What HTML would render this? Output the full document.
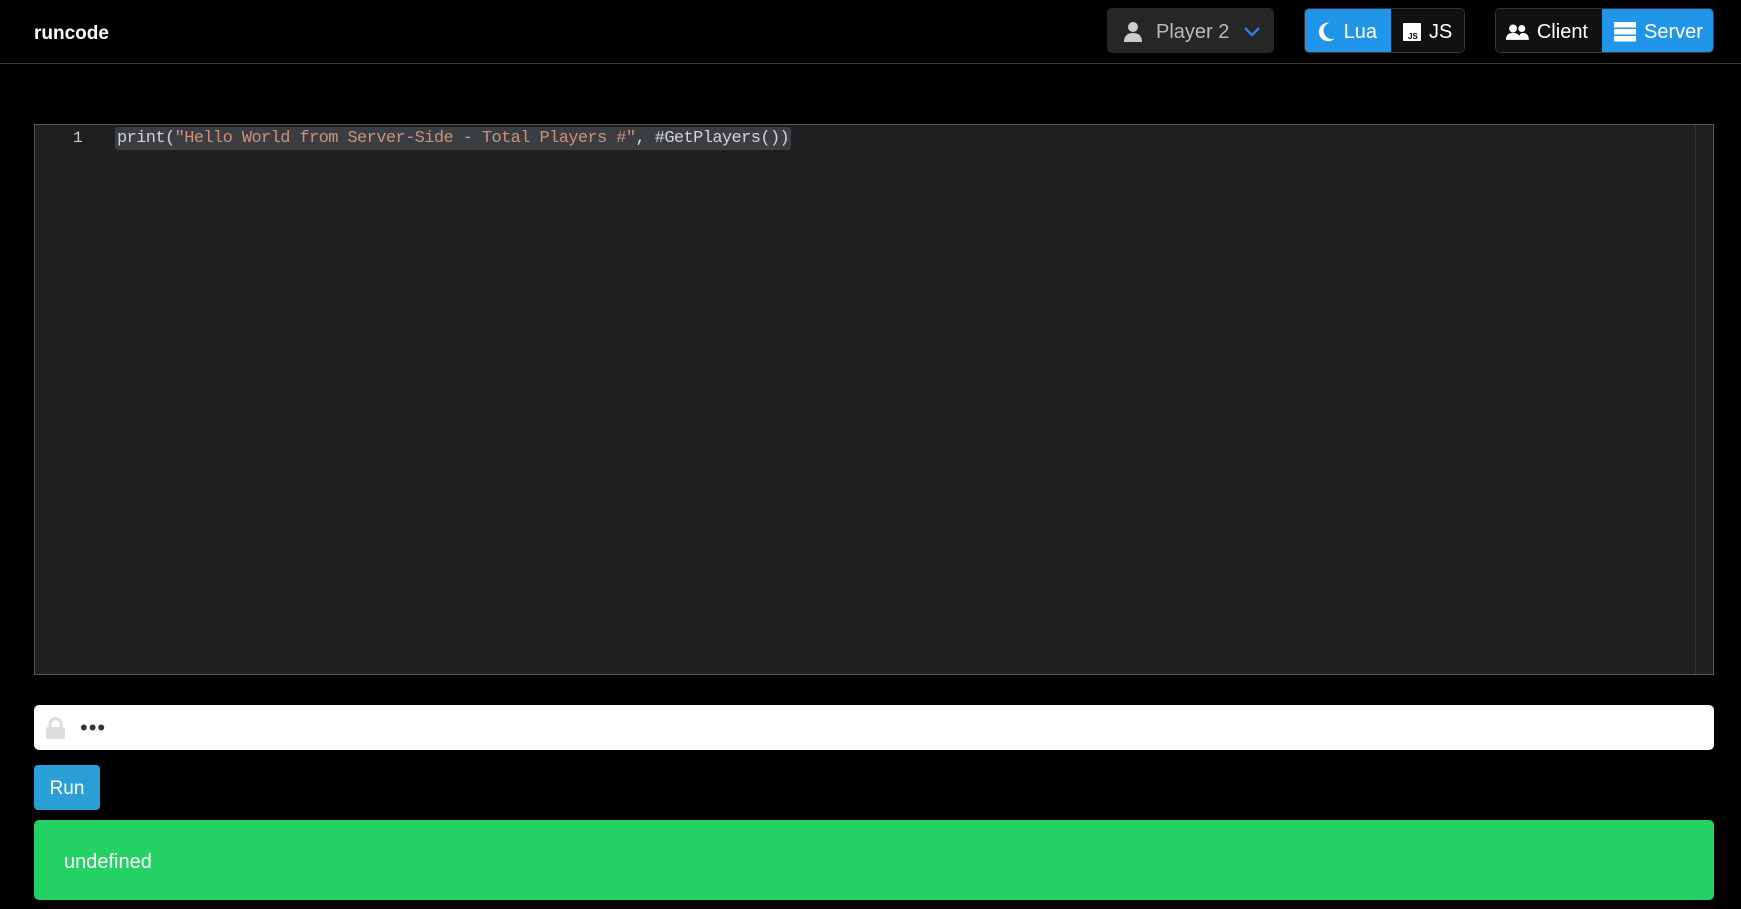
<!DOCTYPE html>
<html><head><meta charset="utf-8"><style>
*{box-sizing:border-box;margin:0;padding:0}
body{width:1741px;height:909px;background:#000;font-family:"Liberation Sans",sans-serif;color:#fff;position:relative;overflow:hidden}
.hdr{position:absolute;left:0;top:0;width:1741px;height:64px;border-bottom:1px solid #3a3a3a}
.logo{position:absolute;left:34px;top:23px;font-weight:bold;font-size:19px}
.btn{position:absolute;top:8px;height:45px;border-radius:5px;display:flex;align-items:center;font-size:20px;white-space:nowrap}
.seg{height:100%;display:flex;align-items:center;padding:0 14px;gap:8px;white-space:nowrap;padding-top:3px}
.ed{position:absolute;left:34px;top:124px;width:1680px;height:551px;background:#1f1f1f;border:1px solid #555}
.code{position:absolute;top:2px;left:80px;font-family:"Liberation Mono",monospace;font-size:17px;letter-spacing:-0.6px;background:#3a3d41;padding:2px 2px;border-radius:3px;color:#d4d4d4;white-space:pre}
.str{color:#ce9178}
.inp{position:absolute;left:34px;top:705px;width:1680px;height:45px;background:#fff;border-radius:5px}
.run{position:absolute;left:34px;top:765px;width:66px;height:45px;background:#2a9fd6;border-radius:4px;font-size:19px;display:flex;align-items:center;justify-content:center;padding-top:3px}
.ok{position:absolute;left:34px;top:820px;width:1680px;height:80px;background:#24d164;border-radius:5px;font-size:20px;padding:31px 30px}
</style></head><body>
<div class="hdr">
<div class="logo">runcode</div>
<div class="btn" style="left:1107px;width:167px;background:#262626;color:#bbb">
 <div class="seg" style="padding-left:17px;gap:14px">
 <svg width="18" height="22" viewBox="0 0 18 22"><circle cx="9" cy="6" r="5" fill="#ccc"/><path d="M0 21 Q0 12 9 12 Q18 12 18 21Z" fill="#ccc"/></svg>
 <span>Player 2</span>
 <svg width="18" height="12" viewBox="0 0 18 12"><path d="M2 2 L9 9 L16 2" stroke="#2a7fe0" stroke-width="2.5" fill="none"/></svg></div>
</div>
<div class="btn" style="left:1304px;width:161px;border:1px solid #333;overflow:hidden">
 <div class="seg" style="background:#2196e8;width:86px;padding-left:12px"><svg width="20" height="22" viewBox="0 0 20 22"><path d="M13 1 A10 10 0 1 0 19 18 A9 9 0 0 1 13 1Z" fill="#fff"/></svg><span>Lua</span></div>
 <div class="seg" style="background:#111;flex:1;padding-left:12px"><svg width="18" height="18"><rect width="18" height="18" fill="#fff"/><text x="5" y="16" font-size="8" font-weight="bold" fill="#000" font-family="Liberation Sans">JS</text></svg><span>JS</span></div>
</div>
<div class="btn" style="left:1495px;width:219px;border:1px solid #333;overflow:hidden">
 <div class="seg" style="background:#111;width:106px;padding-left:10px"><svg width="26" height="18" viewBox="0 0 26 18"><circle cx="8" cy="5" r="4.5" fill="#fff"/><circle cx="18" cy="5" r="4" fill="#fff"/><path d="M0 18 Q0 10 8 10 Q16 10 16 18Z M14 18 Q15 10 19 10 Q26 10 26 18Z" fill="#fff"/></svg><span>Client</span></div>
 <div class="seg" style="background:#2196e8;flex:1;padding-left:12px"><svg width="22" height="20" viewBox="0 0 22 20"><rect y="0" width="22" height="5.5" fill="#fff"/><rect y="7" width="22" height="5.5" fill="#fff"/><rect y="14" width="22" height="5.5" fill="#fff"/></svg><span>Server</span></div>
</div>
</div>
<div class="ed">
 <div style="position:absolute;left:38px;top:4px;font-family:'Liberation Mono',monospace;font-size:16px;color:#ccc">1</div>
 <div class="code">print(<span class="str">"Hello World from Server-Side - Total Players #"</span>, #GetPlayers())</div>
 <div style="position:absolute;right:0;top:0;width:18px;height:549px;border-left:1px solid #333;background:#1f1f1f"></div>
</div>
<div class="inp">
 <svg style="position:absolute;left:12px;top:12px" width="19" height="22" viewBox="0 0 19 22"><path d="M4 10 V7 A5.5 5.5 0 0 1 15 7 V10" stroke="#ddd" stroke-width="3" fill="none"/><rect y="10" width="19" height="12" rx="2" fill="#ddd"/></svg>
 <div style="position:absolute;left:46px;top:10px;color:#333;font-size:22px;letter-spacing:1px">•••</div>
</div>
<div class="run">Run</div>
<div class="ok">undefined</div>
</body></html>
